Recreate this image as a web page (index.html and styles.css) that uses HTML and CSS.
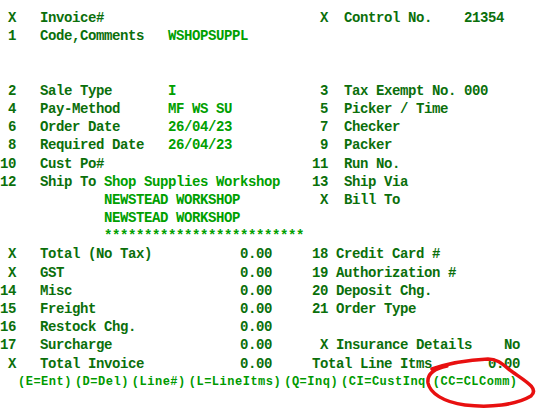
FILE: index.html
```html
<!DOCTYPE html>
<html>
<head>
<meta charset="utf-8">
<link rel="stylesheet" href="styles.css">
</head>
<body>
<div class="screen">
  <div class="rows">
    <div class="row"> X   Invoice#                           X  Control No.    21354</div>
    <div class="row"> 1   Code,Comments   <span class="v">WSHOPSUPPL</span></div>
    <div class="row"></div>
    <div class="row"></div>
    <div class="row"> 2   Sale Type       <span class="v">I</span>                  3  Tax Exempt No. 000</div>
    <div class="row"> 4   Pay-Method      <span class="v">MF WS SU</span>           5  Picker / Time</div>
    <div class="row"> 6   Order Date      <span class="v">26/04/23</span>           7  Checker</div>
    <div class="row"> 8   Required Date   <span class="v">26/04/23</span>           9  Packer</div>
    <div class="row">10   Cust Po#                          11  Run No.</div>
    <div class="row">12   Ship To <span class="v">Shop Supplies Workshop</span>    13  Ship Via</div>
    <div class="row">             <span class="v">NEWSTEAD WORKSHOP</span>          X  Bill To</div>
    <div class="row">             <span class="v">NEWSTEAD WORKSHOP</span></div>
    <div class="row">             <span class="v">*************************</span></div>
    <div class="row"> X   Total (No Tax)           0.00     18 Credit Card #</div>
    <div class="row"> X   GST                      0.00     19 Authorization #</div>
    <div class="row">14   Misc                     0.00     20 Deposit Chg.</div>
    <div class="row">15   Freight                  0.00     21 Order Type</div>
    <div class="row">16   Restock Chg.             0.00</div>
    <div class="row">17   Surcharge                0.00      X Insurance Details    No</div>
    <div class="row"> X   Total Invoice            0.00     Total Line Itms       0.00</div>
  </div>
  <div class="keys">
    <span>(E=Ent)</span>
    <span>(D=Del)</span>
    <span>(Line#)</span>
    <span>(L=LineItms)</span>
    <span>(Q=Inq)</span>
    <span>(CI=CustInq</span>
    <span class="last">(CC=CLComm)</span>
  </div>
  <svg class="mark" width="540" height="410" viewBox="0 0 540 410">
    <path d="M 432 369 C 449 363, 468 360, 488 359 C 499 359, 504 366, 514 373 C 527 382, 539 389, 531 396 C 516 405, 490 408, 465 405 C 443 402, 430 393, 428 383 C 427 375, 432 369, 447 366" fill="none" stroke="#e81010" stroke-width="3.5" stroke-linecap="round"/>
  </svg>
</div>
</body>
</html>
```
FILE: styles.css
```css
html, body {
  margin: 0;
  padding: 0;
  background: #ffffff;
}

.screen {
  position: relative;
  width: 540px;
  height: 410px;
  padding-top: 9px;
  box-sizing: border-box;
  overflow: hidden;
}

.rows {
  display: flex;
  flex-direction: column;
}

.row {
  height: 18.2px;
  line-height: 18.2px;
  white-space: pre;
  font-family: "Liberation Mono", "Courier New", monospace;
  font-size: 14px;
  letter-spacing: -0.4px;
  font-weight: bold;
  color: #0b6f0b;
}

.v {
  color: #00a000;
}

.keys {
  display: flex;
  gap: 3px;
  height: 18.2px;
  line-height: 18.2px;
  padding-left: 18px;
  white-space: pre;
  font-family: "Liberation Mono", "Courier New", monospace;
  font-size: 12px;
  letter-spacing: 0.5px;
  font-weight: bold;
  color: #009a00;
}

.keys .last {
  margin-left: 4px;
}

.mark {
  position: absolute;
  top: 0;
  left: 0;
  pointer-events: none;
}
```
